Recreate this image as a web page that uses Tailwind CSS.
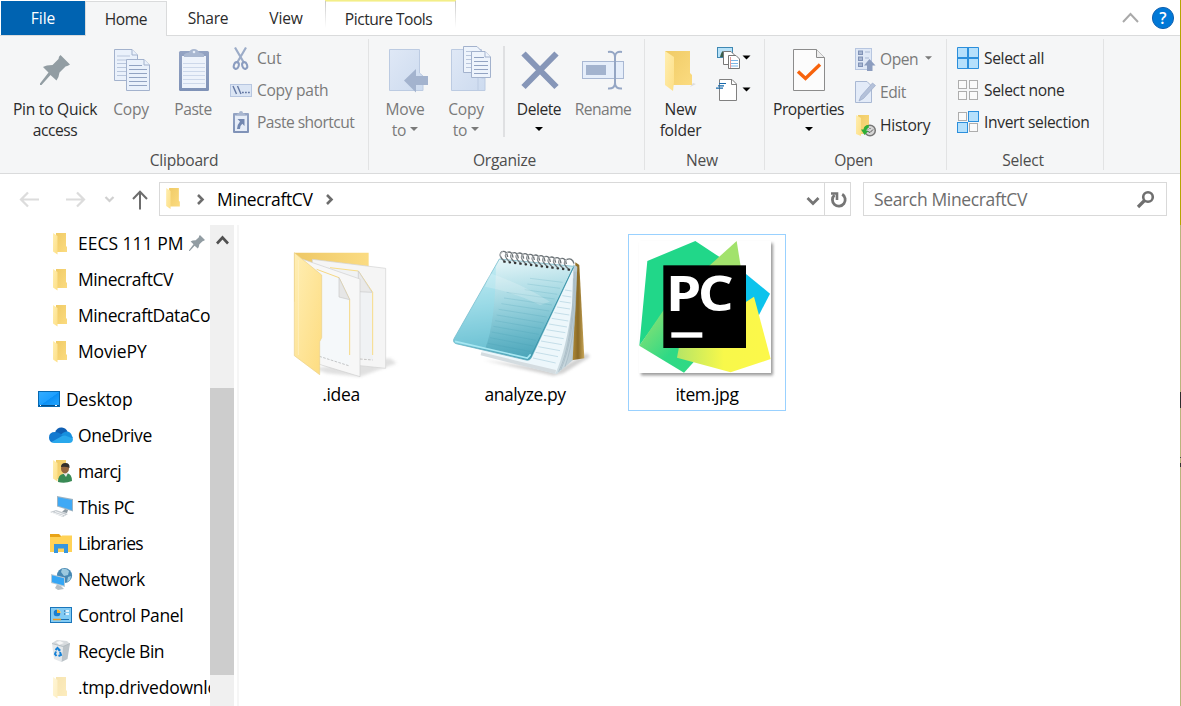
<!DOCTYPE html>
<html lang="en">
<head>
<meta charset="utf-8">
<title>MinecraftCV</title>
<script src="https://cdn.jsdelivr.net/npm/@tailwindcss/browser@4"></script>
</head>
<body class="bg-white">
<svg width="0" height="0" class="absolute">
  <defs>
    <linearGradient id="fold" x1="0" x2="1" y1="0" y2="1"><stop offset="0" stop-color="#f0cb66"/><stop offset="1" stop-color="#fbdb80"/></linearGradient>
    <linearGradient id="flap" x1="0" x2="1" y1="0" y2="1"><stop offset="0" stop-color="#ffeeb0"/><stop offset="1" stop-color="#fddf86"/></linearGradient>
    <linearGradient id="pale" x1="0" x2="1" y1="0" y2="1"><stop offset="0" stop-color="#dfe8f6"/><stop offset="1" stop-color="#cddbef"/></linearGradient>
    <linearGradient id="slate" x1="0" x2="0" y1="0" y2="1"><stop offset="0" stop-color="#93a3c3"/><stop offset="1" stop-color="#7f92b7"/></linearGradient>
    <linearGradient id="screen" x1="0" x2="1" y1="0" y2="1"><stop offset="0" stop-color="#35adff"/><stop offset=".5" stop-color="#1ea0ff"/><stop offset=".52" stop-color="#0c90f5"/><stop offset="1" stop-color="#28a8ff"/></linearGradient>
    <symbol id="sf" viewBox="0 0 14 22"><path d="M3 0H13V13L14 14V19H3Z" fill="url(#fold)"/><path d="M0 0L4.500 3V21.500L0 18.500Z" fill="url(#flap)"/></symbol>
    <symbol id="pin" viewBox="0 0 30 30"><path d="M20.500 0L30 9.500Q28 11 25.500 11.500L19.500 17.500Q19 22 16.500 25.500L10.500 20L1.500 30H0V28.500L8.500 17.500L3 12Q6 10 12.500 10L18.500 4Q18.500 1.500 20.500 0Z" fill="#929da3"/></symbol>
    <symbol id="dd" viewBox="0 0 8 4"><path d="M0 0H8L4 4Z" fill="currentColor"/></symbol>
  </defs>
</svg>
<div class="relative w-[1181px] h-[706px] overflow-hidden bg-white flex flex-col font-['Open_Sans','Noto_Sans',sans-serif] text-[15.6px] text-[#2b2b2b] whitespace-nowrap">

  <!-- Tab strip -->
  <div class="h-9 pl-px flex border-b border-[#dadbdc] shrink-0 relative [&_span]:pt-0.5">
    <div class="mt-px w-[84px] h-[34px] bg-[#0063b1] text-white flex items-center justify-center"><span>File</span></div>
    <div class="mt-px w-[82px] h-[35px] bg-[#f5f6f7] border border-b-0 border-[#dadbdc] flex items-center justify-center -mb-px"><span class="tracking-[-0.4px]">Home</span></div>
    <div class="w-[82px] flex items-center justify-center"><span class="tracking-[-0.3px]">Share</span></div>
    <div class="w-[74px] flex items-center justify-center"><span class="tracking-[-0.2px]">View</span></div>
    <div class="w-[131px] h-7 border-t border-[#f3ee88] bg-linear-to-b from-[#c8c8c8] to-white px-px ml-0.5"><div class="h-full bg-white border-t border-[#f8f5b8] flex items-center justify-center pt-2 pr-1"><span class="tracking-[-0.5px]">Picture Tools</span></div></div>
    <div class="flex-1"></div>
    <svg width="70" height="35" viewBox="1111 0 70 35"><path d="M1123 22L1130.500 14L1138 22" fill="none" stroke="#a9a9a9" stroke-width="2"/><circle cx="1163" cy="18" r="10.600" fill="#0078d7" stroke="#1362b0"/><text x="1163" y="24" text-anchor="middle" font-size="16" font-weight="600" fill="#fff">?</text></svg>
  </div>

  <!-- Ribbon -->
  <div class="h-[138px] pl-px flex bg-[#f5f6f7] border-b border-[#dadbdc] shrink-0 text-[#2b2b2b] tracking-[-0.25px]">
    <!-- Clipboard -->
    <div class="w-[368px] flex flex-col relative">
      <div class="h-[113px] flex pl-[3px]">
        <div class="w-[102px] text-center leading-[21px]">
          <svg class="block" width="102" height="63" viewBox="4 36 102 63"><use href="#pin" x="40" y="55" width="30" height="30"/></svg>
          <div>Pin to Quick</div><div class="tracking-[-0.45px]">access</div>
        </div>
        <div class="w-[50px] text-center leading-[21px] text-[#7a7a7a]">
          <svg class="block" width="50" height="63" viewBox="106 36 50 63"><g fill="#eaf1fb" stroke="#a3b2cd"><path d="M114.500 49.500H132L137.500 55V80.500H114.500Z"/><path d="M132 49.500V55H137.500" /><path d="M117 56h13M117 60h13M117 63.500h9M117 67.500h9M117 71.500h9M117 75.500h9" stroke="#b9c6dc"/><path d="M126.500 59.500H144L149.500 65V90.500H126.500Z"/><path d="M144 59.500V65H149.500"/><path d="M129 65.500h13M129 69.500h18M129 73.500h18M129 77.500h18M129 81.500h18M129 85.500h18" stroke="#92a3c2"/></g></svg>
          Copy
        </div>
        <div class="w-[74px] text-center leading-[21px] text-[#7a7a7a] tracking-[-0.5px]">
          <svg class="block" width="74" height="63" viewBox="156 36 74 63"><rect x="179" y="51" width="30" height="40" rx="1.500" fill="url(#slate)"/><path d="M182 56H206V88H182Z" fill="#eef3fb"/><path d="M183 63.500h22M183 67.500h22M183 71.500h22M183 75.500h22M183 79.500h22M183 83.500h22" stroke="#cdd8ea"/><path d="M184 57V54.500Q185 53 189 52.500Q190 49 194 49Q198 49 199 52.500Q203 53 204 54.500V57Z" fill="#a9b7d0"/><circle cx="194" cy="52" r="1.300" fill="#e6edf8"/></svg>
          Paste
        </div>
        <div class="pt-1.5 text-[#7a7a7a] [&_span]:pt-0.5">
          <div class="h-8 flex items-center"><svg width="27" height="32" viewBox="230 42 27 32"><path d="M235 47.500L243.500 62M246 47.500L237.500 62" stroke="#9cacc8" stroke-width="2.200"/><g fill="none" stroke="#8b9dc0" stroke-width="2"><ellipse cx="236.300" cy="65.500" rx="2.400" ry="3.400" transform="rotate(20 236.300 65.500)"/><ellipse cx="244.700" cy="65.500" rx="2.400" ry="3.400" transform="rotate(-20 244.700 65.500)"/></g></svg><span>Cut</span></div>
          <div class="h-8 flex items-center"><svg width="27" height="32" viewBox="230 74 27 32"><rect x="230.500" y="84.500" width="21" height="12" fill="#dbe5f4" stroke="#b7c6e0"/><path d="M233 86L236.500 94M237.500 86L241 94" stroke="#6478a3" stroke-width="1.400"/><path d="M242 92.500h1.800M245 92.500h1.800M248 92.500h1.800" stroke="#6478a3" stroke-width="1.600"/></svg><span class="tracking-[-0.3px]">Copy path</span></div>
          <div class="h-8 flex items-center"><svg width="27" height="32" viewBox="230 106 27 32"><rect x="233" y="113" width="16" height="20" rx="1" fill="url(#slate)"/><path d="M235 115.500H247V131H235Z" fill="#e6edf8"/><path d="M236 115.500Q237 113 239 113Q239 111 241 111Q243 111 243 113Q245 113 246 115.500Z" fill="#a9b7d0"/><path d="M237.500 119H244.500V126L242.300 123.800Q240 125.500 240 129H237Q237.500 124 240 121.500Z" fill="#7287b0"/></svg><span class="tracking-[-0.53px]">Paste shortcut</span></div>
        </div>
      </div>
      <div class="h-[22px] pt-px pr-0.5 flex items-center justify-center text-[#4d4d4d]">Clipboard</div>
      <div class="absolute right-0 top-[3px] w-px h-[131px] bg-[#e2e3e4]"></div>
    </div>
    <!-- Organize -->
    <div class="w-[276px] flex flex-col relative">
      <div class="h-[113px] flex pl-[5px]">
        <div class="w-[62px] text-center leading-[21px] text-[#7a7a7a]">
          <svg class="block" width="62" height="63" viewBox="374 36 62 63"><path d="M389.500 49.500H419.500V73L423 76V90.500H389.500Z" fill="url(#pale)" stroke="#bccbe2"/><path d="M404 80.500L416 69V76H428V85H416V92.500Z" fill="#a3b3ce"/></svg>
          <div>Move</div><div class="flex items-center justify-center">to<svg class="ml-1 mt-[-3px]" width="8" height="4"><use href="#dd" width="8" height="4"/></svg></div>
        </div>
        <div class="w-[60px] text-center leading-[21px] text-[#7a7a7a]">
          <svg class="block" width="60" height="63" viewBox="436 36 60 63"><path d="M451.500 49.500H481.500V78H485V90.500H451.500Z" fill="url(#pale)" stroke="#bccbe2"/><path d="M478 78V90" stroke="#bccbe2"/><g fill="#eef4fc" stroke="#a3b2cd"><path d="M463.500 46.500H477L482.500 52V72.500H463.500Z"/><path d="M466 51.500h9M466 55.500h9M466 59.500h5M466 63.500h5M466 67.500h5" stroke="#b9c6dc"/><path d="M471.500 51.500H485L490.500 57V77.500H471.500Z"/><path d="M485 51.500V57H490.500"/><path d="M474 57.500h10M474 61.500h14M474 65.500h14M474 69.500h14M474 73.500h14" stroke="#92a3c2"/></g></svg>
          <div>Copy</div><div class="flex items-center justify-center">to<svg class="ml-1 mt-[-3px]" width="8" height="4"><use href="#dd" width="8" height="4"/></svg></div>
        </div>
        <div class="w-0.5 ml-[7px] mr-[3px] mt-2.5 h-[91px] bg-[#dfe0e2]"></div>
        <div class="w-[62px] text-center leading-[21px] tracking-[-0.45px]">
          <svg class="block" width="62" height="63" viewBox="508 36 62 63"><path d="M523.500 53.500L556.500 87M556.500 53.500L523.500 87" stroke="#8696b8" stroke-width="6"/></svg>
          <div>Delete</div><svg class="mx-auto mt-[7px] text-black" width="8" height="4"><use href="#dd" width="8" height="4"/></svg>
        </div>
        <div class="w-[66px] text-center leading-[21px] text-[#7a7a7a] tracking-[-0.55px]">
          <svg class="block" width="66" height="63" viewBox="570 36 66 63"><rect x="582.500" y="61.500" width="41" height="17" fill="#e6eefa" stroke="#a9b8d3"/><rect x="586" y="65" width="20" height="10" fill="#a3b3ce"/><path d="M608 52Q615 51 615 57V83Q615 89 608 88.500M622 52Q615 51 615 57M615 83Q615 89 622 88.500" fill="none" stroke="#95a6c4" stroke-width="2"/></svg>
          Rename
        </div>
      </div>
      <div class="h-[22px] pt-px pr-[5px] flex items-center justify-center text-[#4d4d4d]">Organize</div>
      <div class="absolute right-0 top-[3px] w-px h-[131px] bg-[#e2e3e4]"></div>
    </div>
    <!-- New -->
    <div class="w-[120px] flex flex-col relative">
      <div class="h-[113px] flex pl-2">
        <div class="w-[55px] text-center leading-[21px]">
          <svg class="block" width="55" height="63" viewBox="653 36 55 63"><path d="M690 87l6-3-3-1z" fill="#ddd"/><path d="M665 51H690V73L692 75V85H672Z" fill="url(#fold)"/><path d="M665 51L674 57V82L673 91L665 85Z" fill="url(#flap)"/></svg>
          <div>New</div><div>folder</div>
        </div>
        <svg width="48" height="72" viewBox="708 36 48 72"><rect x="717.500" y="47.500" width="15" height="10" fill="#b8e2f8" stroke="#3f88b3"/><path d="M720 57Q722 49 724 52Q726 54 726 57Z" fill="#39604d"/><g fill="#fff" stroke="#777"><path d="M723.500 51.500H731L734.500 55V64.500H723.500Z"/><path d="M728.500 55.500H736L739.500 59V68.500H728.500Z"/></g><path d="M730 60.500h8M730 63.500h8M730 66h8" stroke="#7ab6e6"/><path d="M730.500 57v11" stroke="#e59a9a"/><path d="M742.500 55.500h8l-4 4z" fill="#000"/><path d="M719.500 79.500H732L736.500 84V100.500H719.500Z" fill="#fff" stroke="#808080"/><path d="M731.500 79.500V84.500H736.500" fill="none" stroke="#808080"/><path d="M719 83.500h7M718 85.800h6M716 88.200h7" stroke="#1568ab" stroke-width="1.200"/><path d="M742.500 87.500h8l-4 4z" fill="#000"/></svg>
      </div>
      <div class="h-[22px] pt-px pr-1.5 flex items-center justify-center text-[#4d4d4d]">New</div>
      <div class="absolute right-0 top-[3px] w-px h-[131px] bg-[#e2e3e4]"></div>
    </div>
    <!-- Open -->
    <div class="w-[182px] flex flex-col relative">
      <div class="h-[113px] flex pl-[5px]">
        <div class="w-[77px] text-center leading-[21px] tracking-[-0.45px]">
          <svg class="block" width="77" height="63" viewBox="770 36 77 63"><path d="M793.500 49.500H816.500L824.500 57.500V90.500H793.500Z" fill="#fcfcfc" stroke="#8c8c8c"/><path d="M816.500 49.500V57.500H824.500" fill="#eee" stroke="#8c8c8c"/><path d="M798 71.500L805.500 78.500L820 64.500" fill="none" stroke="#f7630c" stroke-width="3.400"/></svg>
          <div>Properties</div><svg class="mx-auto mt-[7px] text-black" width="8" height="4"><use href="#dd" width="8" height="4"/></svg>
        </div>
        <div class="pl-1.5 pt-[7px] [&_span]:pt-px">
          <div class="h-[33px] flex items-center text-[#7a7a7a]"><svg width="27" height="33" viewBox="853 43 27 33"><rect x="855.500" y="48.500" width="16" height="21" fill="#dfe8f6" stroke="#b7c6e0"/><g fill="#a7b6d1" stroke="#8092b6"><rect x="858.500" y="51" width="4" height="3.500"/><rect x="858.500" y="57" width="4" height="3.500"/><rect x="858.500" y="63" width="4" height="3.500"/></g><path d="M865 52h5M865 58h4" stroke="#a9b8d3"/><path d="M869.500 59L875.500 65.500H872.500V71H867V65.500H864Z" fill="#8c9dbf"/></svg><span class="tracking-[-0.5px]">Open</span><svg class="ml-[7px] mt-[-3px]" width="7" height="4"><use href="#dd" width="7" height="4"/></svg></div>
          <div class="h-[33px] flex items-center text-[#7a7a7a]"><svg width="27" height="33" viewBox="853 76 27 33"><path d="M855.500 81.500H867L871.500 86V102.500H855.500Z" fill="#e3ebf8" stroke="#a9b8d3"/><path d="M859 101L861 96L872.500 83L875.500 85.500L863.500 98.500Z" fill="#b4c1d9" stroke="#9babca" stroke-width=".7"/></svg><span class="tracking-[-0.45px]">Edit</span></div>
          <div class="h-[33px] flex items-center"><svg width="27" height="33" viewBox="853 109 27 33"><path d="M858 115H869V134H858Z" fill="url(#fold)"/><path d="M856 115L861 118V136L856 134Z" fill="url(#flap)"/><circle cx="870" cy="130.500" r="5.300" fill="#d6d6d6" stroke="#777" stroke-width="1.500"/><path d="M867 131l3 1.500 3-3M870 128v1M867 128.500l1 1" stroke="#555" fill="none"/><path d="M868.500 125Q864 125 863.500 129.500H861L864.500 135L868.500 131H866.500Q866.500 128 869 127.500Z" fill="#2fae38"/></svg><span>History</span></div>
        </div>
      </div>
      <div class="h-[22px] pt-px pr-[5px] flex items-center justify-center text-[#4d4d4d] tracking-[-0.4px]">Open</div>
      <div class="absolute right-0 top-[3px] w-px h-[131px] bg-[#e2e3e4]"></div>
    </div>
    <!-- Select -->
    <div class="w-[157px] flex flex-col relative">
      <div class="h-[113px] pl-2 pt-1.5 tracking-[-0.36px] [&_span]:pt-0.5">
        <div class="h-8 flex items-center"><svg width="29" height="32" viewBox="955 42 29 32"><path d="M957.500 47.500H978.500V68.500H957.500Z" fill="#b5e0fc" stroke="#2b8fdc"/><path d="M968 47V69M957 58H979" stroke="#2b8fdc" stroke-width="2"/></svg><span>Select all</span></div>
        <div class="h-8 flex items-center"><svg width="29" height="32" viewBox="955 74 29 32"><g fill="#fafafa" stroke="#adadad"><rect x="958.500" y="80.500" width="8" height="8"/><rect x="969.500" y="80.500" width="8" height="8"/><rect x="958.500" y="91.500" width="8" height="8"/><rect x="969.500" y="91.500" width="8" height="8"/></g></svg><span>Select none</span></div>
        <div class="h-8 flex items-center"><svg width="29" height="32" viewBox="955 106 29 32"><g fill="#fafafa" stroke="#adadad"><rect x="958.500" y="112.500" width="8" height="8"/><rect x="969.500" y="123.500" width="8" height="8"/></g><g fill="#b5e0fc" stroke="#2b8fdc"><rect x="968.500" y="111.500" width="10" height="10"/><rect x="957.500" y="122.500" width="10" height="10"/></g></svg><span>Invert selection</span></div>
      </div>
      <div class="h-[22px] pt-px pr-[5px] flex items-center justify-center text-[#4d4d4d]">Select</div>
      <div class="absolute right-0 top-[3px] w-px h-[131px] bg-[#e2e3e4]"></div>
    </div>
  </div>

  <!-- Address row -->
  <div class="h-[51px] flex pt-2 shrink-0 text-[17.5px] text-black tracking-[-0.36px]">
    <svg width="159" height="34" viewBox="0 182 159 34" fill="none"><g stroke="#dcdcdc" stroke-width="2.200"><path d="M39 199.500H21M28 192.500L21 199.500L28 206.500M66 199.500H84M77 192.500L84 199.500L77 206.500"/><path d="M105.500 197L109.500 201L113.500 197" stroke="#d0d0d0"/></g><path d="M140 209.500V192M133 199L140 191.700L147 199" stroke="#6d6d6d" stroke-width="2"/></svg>
    <div class="w-[692px] h-[34px] border border-[#d9d9d9] flex items-center">
      <svg width="57" height="32" viewBox="160 183 57 32"><use href="#sf" x="166" y="188" width="14" height="21.500"/><path d="M198 195L202.500 199.500L198 204" fill="none" stroke="#6d6d6d" stroke-width="2.600"/></svg>
      <span>MinecraftCV</span>
      <svg width="30" height="32" viewBox="313 183 30 32"><path d="M327 195L331.500 199.500L327 204" fill="none" stroke="#6d6d6d" stroke-width="2.600"/></svg>
      <div class="flex-1"></div>
      <svg width="50" height="32" viewBox="800 183 50 32" fill="none"><path d="M807.500 198L813 203.500L818.500 198" stroke="#757575" stroke-width="2.800"/><path d="M824.500 182V216" stroke="#d9d9d9"/><path d="M842.200 194.300A6.400 6.400 0 1 1 834.500 195" stroke="#757575" stroke-width="2.800"/><path d="M831 193.500H837V200" stroke="#757575" stroke-width="2.600"/></svg>
    </div>
    <div class="ml-3 w-[304px] h-[34px] border border-[#d9d9d9] flex items-center justify-between pl-2.5 text-[#6d6d6d]">
      <span>Search MinecraftCV</span>
      <svg width="34" height="32" viewBox="1132 183 34 32" fill="none" stroke="#6f6f6f"><circle cx="1148" cy="197" r="4.800" stroke-width="2.600"/><path d="M1144.500 200.500L1138 207" stroke-width="3.200"/></svg>
    </div>
  </div>

  <!-- Body -->
  <div class="flex-1 flex min-h-0 text-[17.5px] text-black">
    <div class="w-[210px] overflow-hidden shrink-0 tracking-[-0.4px]">
      <div class="h-9 flex items-center pl-[53px]"><svg class="mt-0.5" width="25" height="22"><use href="#sf" width="14" height="22"/></svg><span class="tracking-[0px]">EECS 111 PM</span><svg class="ml-1.5" width="16" height="16"><use href="#pin" width="16" height="16"/></svg></div>
      <div class="h-9 flex items-center pl-[53px]"><svg class="mt-0.5" width="25" height="22"><use href="#sf" width="14" height="22"/></svg><span>MinecraftCV</span></div>
      <div class="h-9 flex items-center pl-[53px]"><svg class="mt-0.5 shrink-0" width="25" height="22"><use href="#sf" width="14" height="22"/></svg><span>MinecraftDataCo</span></div>
      <div class="h-9 flex items-center pl-[53px]"><svg class="mt-0.5" width="25" height="22"><use href="#sf" width="14" height="22"/></svg><span class="tracking-[-0.15px]">MoviePY</span></div>
      <div class="mt-3 h-9 flex items-center pl-[38px]"><svg width="28" height="16"><rect x=".5" y=".5" width="21" height="15" fill="url(#screen)" stroke="#0868b0"/><path d="M1 14.500H21" stroke="#064f8a"/><path d="M2 14.500h1M17 14.500h2" stroke="#fff"/></svg><span class="tracking-[-0.15px]">Desktop</span></div>
      <div class="h-9 flex items-center pl-[49px]"><svg width="29" height="16" viewBox="0 0 29 16"><path d="M6 5.500Q8 0 13 .5Q17 1 18.500 4.500L15 9L6 6Z" fill="#0f5fb3"/><path d="M0 10.500Q0 5 6 5Q9 5 12 7L16 9L3 15.500Q0 14 0 10.500Z" fill="#1279d0"/><path d="M12 8Q14 4.500 18.500 4.500Q22 5 23 9L24 11Q22 13 16 10Z" fill="#1790df"/><path d="M2.500 15L13 9L16 8.500L24 11.500Q24 16 20 16H5Q3.500 16 2.500 15Z" fill="#29a8ec"/></svg><span>OneDrive</span></div>
      <div class="h-9 flex items-center pl-[49px]"><svg width="29" height="24" viewBox="0 0 29 24"><use href="#sf" x="4" y="1" width="14" height="22"/><path d="M9 23Q9 15.500 14 15L18 14Q23 15 23 22Q16 25 9 23Z" fill="#398a55"/><path d="M14 14L17 18L19 14Z" fill="#e8e8e8"/><ellipse cx="16" cy="9.500" rx="4" ry="5" fill="#94663f"/><path d="M12 8Q12 4 16.500 4Q21 4 20.500 9L18 8Q15 7.500 12 8Z" fill="#33302d"/></svg><span class="tracking-[-0.55px]">marcj</span></div>
      <div class="h-9 flex items-center pl-[49px]"><svg width="29" height="24" viewBox="0 0 29 24"><path d="M8 1L24 4V16.500L8 11.500Z" fill="#9db4c4"/><path d="M9 2.300L23 5V15.200L9 10.800Z" fill="#3fa9f5"/><path d="M16 14L19 15L18 18L13 17Z" fill="#8f9ba3"/><path d="M1 17L7 15L19 19L14 22Z" fill="#c5cbd0"/><path d="M3 17.500L14 21M6 16.500L16 20" stroke="#fff" stroke-width=".8"/></svg><span>This PC</span></div>
      <div class="h-9 flex items-center pl-[49px]"><svg width="29" height="22" viewBox="0 0 29 22"><path d="M1 2H10L12 4V8H1Z" fill="#e8a317"/><path d="M1 5H11L13 3.500H23V20H1Z" fill="#ffd257"/><path d="M5 12H19V21H15V16.500H9V21H5Z" fill="#3596de"/></svg><span class="tracking-[-0.65px]">Libraries</span></div>
      <div class="h-9 flex items-center pl-[49px]"><svg width="29" height="24" viewBox="0 0 29 24"><circle cx="15.500" cy="8.500" r="7.600" fill="#4788b3"/><path d="M13 2Q17 1 20 4L19 8L15 9L12 5ZM19 10l3-1-1 4-3 2z" fill="#9dcadf"/><path d="M2 7L16 10.500V20L2 16Z" fill="#b9cbd6"/><path d="M3 8.300L15 11.300V18.500L3 15.200Z" fill="#35a6f5"/><path d="M8 17.500L12 19L15 22L9 23L6 21Z" fill="#b7c0c6"/></svg><span>Network</span></div>
      <div class="h-9 flex items-center pl-[49px]"><svg width="29" height="16" viewBox="0 0 29 16"><rect x="1.500" y=".5" width="21" height="15" fill="#82cbf4" stroke="#1a76bb"/><circle cx="8" cy="6" r="3.500" fill="#fff"/><path d="M8 6V2.500A3.500 3.500 0 1 0 11.500 6Z" fill="#1b7fd0"/><path d="M8 6V2.500A3.500 3.500 0 0 1 11.500 6Z" fill="#f7b22f"/><path d="M15 4h5M15 7h5" stroke="#fff" stroke-width="1.700"/><path d="M15 4h1.500M15 7h1.500" stroke="#1a6cab" stroke-width="1.700"/><path d="M4 12.500h8" stroke="#f29a1f" stroke-width="1.500"/><path d="M12 12.500h8" stroke="#1b6fb0"/></svg><span>Control Panel</span></div>
      <div class="h-9 flex items-center pl-[49px]"><svg width="29" height="24" viewBox="0 0 29 24"><path d="M3 4L8 1L18 2L21 5L12 8Z" fill="#d7dbde"/><path d="M7 3l4-1 4 2-5 2z" fill="#f7f7f7"/><path d="M3 4.500L14 7.500L12.500 23L5 20Z" fill="#e4e8eb"/><path d="M14 7.500L21 4.500L18.500 20L12.500 23Z" fill="#bcc3c8"/><path d="M3 4.500L14 7.500L21 4.500" fill="none" stroke="#aab2b8" stroke-width=".8"/><path d="M6.500 11l2-2 2 2-1 1M11 13l1 3-2.500 1M7.500 17l-1.500-2 1-2.500" fill="none" stroke="#1681d6" stroke-width="2"/></svg><span class="tracking-[-0.48px]">Recycle Bin</span></div>
      <div class="h-9 flex items-center pl-[53px]"><svg class="mt-0.5 opacity-50 shrink-0" width="25" height="22"><use href="#sf" width="14" height="22"/></svg><span class="tracking-[-0.25px]">.tmp.drivedownlo</span></div>
    </div>
    <div class="w-6 bg-[#f0f0f0] shrink-0">
      <svg class="block" width="24" height="163" viewBox="210 225 24 163"><path d="M217 243.500L222.500 237.500L228 243.500" fill="none" stroke="#505050" stroke-width="2.600"/></svg>
      <div class="h-[287px] bg-[#cdcdcd]"></div>
    </div>
    <div class="w-0.5 ml-[3px] bg-[#f6f6f6]"></div>
    <div class="flex gap-[25px] pl-[23px] pt-[9px] tracking-[-0.35px]">
      <div class="w-[158px] h-[177px] border border-transparent text-center">
        <svg class="block" width="156" height="147" viewBox="-51 0 468 441">
          <defs>
            <linearGradient id="g1" x1="0" x2="1" y1="0" y2="1"><stop offset="0" stop-color="#ffeeb3"/><stop offset="1" stop-color="#fddc80"/></linearGradient>
            <linearGradient id="g0" x1="0" x2="1"><stop offset="0" stop-color="#eec866"/><stop offset="1" stop-color="#fbdc83"/></linearGradient>
            <filter id="sh"><feGaussianBlur stdDeviation="5"/></filter>
          </defs>
          <path d="M100 400L330 370L350 385L240 425L140 415Z" fill="#ccc" opacity=".6" filter="url(#sh)"/>
          <path d="M43 53H266V200H43Z" fill="url(#g0)"/>
          <path d="M97 73L317 100V400L240 392L97 360Z" fill="#f5f5f5" stroke="#d2d2d2" stroke-width="2"/>
          <path d="M140 97L235 108L278 172V375L140 350Z" fill="#f0f2f4"/>
          <path d="M150 98L235 108L278 172V360" fill="none" stroke="#f8dc86" stroke-width="3"/>
          <path d="M235 108V170L276 172Z" fill="#e9e9e9" stroke="#c9c9c9" stroke-width="2"/>
          <path d="M60 70L240 132V425L118 388Z" fill="#f7f7f7" stroke="#cfcfcf" stroke-width="2"/>
          <path d="M110 103L177 128L209 194V394L110 365Z" fill="#f5f8fa"/>
          <path d="M110 103L177 128L209 194V360" fill="none" stroke="#f5d884" stroke-width="3"/>
          <path d="M118 364L209 393" stroke="#aaa" stroke-width="2" stroke-dasharray="8 4"/>
          <path d="M240 372L278 375" stroke="#aaa" stroke-width="2" stroke-dasharray="8 4"/>
          <path d="M177 128V186L209 194Z" fill="#e6e6e6" stroke="#c9c9c9" stroke-width="2"/>
          <path d="M43 53L125 120V308L119 320V419L43 362Z" fill="url(#g1)" stroke="#ecd08a" stroke-width="2"/>
          <path d="M55 75V360" stroke="#fff3c8" stroke-width="2"/>
        </svg>
        <div class="leading-6">.idea</div>
      </div>
      <div class="w-[158px] h-[177px] border border-transparent text-center">
        <svg class="block" width="156" height="147" viewBox="18 0 468 441">
          <defs>
            <linearGradient id="n1" x1=".45" x2=".6" y1="0" y2="1"><stop offset="0" stop-color="#e4f5f8"/><stop offset=".4" stop-color="#a4d8e2"/><stop offset=".75" stop-color="#69b8c9"/><stop offset="1" stop-color="#48a3b8"/></linearGradient>
            <linearGradient id="n2" x1="0" x2="1" y1="0" y2=".2"><stop offset="0" stop-color="#e0edf2"/><stop offset="1" stop-color="#b7c9d1"/></linearGradient>
            <linearGradient id="n3" x1="0" x2="1"><stop offset="0" stop-color="#b48f3c"/><stop offset=".5" stop-color="#8a6a25"/><stop offset="1" stop-color="#c9a75a"/></linearGradient>
          </defs>
          <path d="M130 375L350 405L440 355L450 365L370 415L340 422Z" fill="#999" opacity=".45" filter="url(#sh)"/>
          <path d="M406 82L418 90L433 370L395 376Z" fill="url(#n3)"/>
          <path d="M400 88L412 95L398 376L350 418L335 410Z" fill="url(#n2)"/>
          <path d="M404 110Q405 310 362 405M408 110Q410 300 375 395M400 130Q400 320 356 410" fill="none" stroke="#a0b4be" stroke-width="2"/>
          <path d="M400 92L396 210Q380 340 346 416L122 360L126 346L270 375Z" fill="#edf7fb"/>
          <path d="M124 352L348 405L346 417L122 361Z" fill="#d4dce0"/>
          <path d="M375 165l20 3M367 182l27 4M359 199l33 5M351 216l39 6M343 233l45 7M335 250l50 8M327 267l54 9M319 284l57 9M311 301l60 10M303 318l63 11M295 335l65 12M287 352l67 13M279 369l68 15" stroke="#bcd9e5" stroke-width="2.500"/>
          <path d="M178 72L402 94L275 366Q270 378 258 375L48 326Q37 322 42 311Z" fill="url(#n1)" stroke="#65aebf" stroke-width="2"/>
          <path d="M270 130l98 12M262 147l98 13M254 164l98 14M200 172l144 20M192 189l144 21M184 206l144 22M176 223l144 23M170 240l142 24M165 257l139 24M160 274l136 24M155 291l133 25M150 308l130 25M144 325l128 25" stroke="#3f95aa" stroke-opacity=".22" stroke-width="2.500"/>
          <path d="M178 72L168 94Q165 270 135 342L48 326Q37 322 42 311Z" fill="#8de0f0" opacity=".38"/>
          <path d="M150 115Q240 145 330 200L300 210Q220 170 135 155Z" fill="#fff" opacity=".2"/>
          <path d="M45 319L262 369L272 358" fill="none" stroke="#a7e7f2" stroke-width="5"/>
          <path d="M400 97L272 366" stroke="#3c95aa" stroke-width="3"/>
          <g fill="none" stroke="#6d7478" stroke-width="4"><path d="M193 79Q172 60 186 50Q200 45 203 66M209 81Q188 62 202 52Q216 47 219 68M225 83Q204 64 218 54Q232 49 235 70M241 84Q220 65 234 55Q248 50 251 71M257 86Q236 67 250 57Q264 52 267 73M273 88Q252 69 266 59Q280 54 283 75M289 90Q268 71 282 61Q296 56 299 77M305 92Q284 73 298 63Q312 58 315 79M321 94Q300 75 314 65Q328 60 331 81M337 96Q316 77 330 67Q344 62 347 83M353 98Q332 79 346 69Q360 64 363 85M369 100Q348 81 362 71Q376 66 379 87M386 103Q365 84 379 74Q397 66 402 86"/></g>
          <g fill="none" stroke="#e4e6e7" stroke-width="2"><path d="M184 66Q178 54 188 49M200 68Q194 56 204 51M216 70Q210 58 220 53M232 71Q226 59 236 54M248 73Q242 61 252 56M264 75Q258 63 268 58M280 77Q274 65 284 60M296 79Q290 67 300 62M312 81Q306 69 316 64M328 83Q322 71 332 66M344 85Q338 73 348 68M360 87Q354 75 364 70M377 90Q371 78 381 73"/></g>
          <path d="M193 80h1M209 82h1M225 84h1M241 86h1M257 88h1M273 90h1M289 92h1M305 94h1M321 96h1M337 98h1M353 100h1M369 102h1M386 104h1" stroke="#333" stroke-width="7" stroke-linecap="round"/>
        </svg>
        <div class="leading-6 pl-0.5 tracking-[-0.45px]">analyze.py</div>
      </div>
      <div class="w-[158px] h-[177px] border border-[#99d1ff] text-center">
        <svg class="block" width="156" height="147" viewBox="27 30 468 441">
          <defs>
            <linearGradient id="p2" x1="0" x2="1"><stop offset="0" stop-color="#b5e566"/><stop offset=".5" stop-color="#f8f84a"/><stop offset="1" stop-color="#fcf84a"/></linearGradient>
            <linearGradient id="p3" x1="0" x2="1" y1="0" y2="1"><stop offset="0" stop-color="#9be36f"/><stop offset=".6" stop-color="#2fd985"/><stop offset="1" stop-color="#30d984"/></linearGradient>
          </defs>
          <rect x="63" y="55" width="396" height="396" fill="#777" opacity=".75" filter="url(#sh)"/>
          <rect x="57" y="48" width="396" height="396" fill="#fff"/>
          <path d="M378 147L450 206L417 270L378 250Z" fill="#0cc3ec"/>
          <path d="M82 108L226 48L300 97L270 200L131 260L58 362Z" fill="#21d789"/>
          <path d="M131 255L58 362L192 443L240 390Z" fill="url(#p3)"/>
          <path d="M266 124L350 48L362 124Z" fill="#a2e26c"/>
          <path d="M402 215L452 402L332 442L171 398L178 360Z" fill="url(#p2)"/>
          <rect x="130" y="121" width="248" height="248" fill="#000"/>
          <g font-family="Open Sans" font-weight="700" font-size="145" fill="#fff" letter-spacing="0"><text x="137" y="257" textLength="107" lengthAdjust="spacingAndGlyphs">P</text><text x="233" y="257" textLength="108" lengthAdjust="spacingAndGlyphs">C</text></g>
          <rect x="154" y="322" width="93" height="16" fill="#fff"/>
        </svg>
        <div class="leading-6">item.jpg</div>
      </div>
    </div>
  </div>

  <!-- Right window edge -->
  <div class="absolute right-0 top-0 w-px h-full flex flex-col bg-[#b9b47c]"><div class="h-[225px] bg-[#b5a500]"></div><div class="mt-[167px] h-4 bg-[#2d2d2d]"></div><div class="mt-[49px] h-px bg-[#444]"></div><div class="mt-[5px] h-1 bg-[#333]"></div></div>
</div>
</body>
</html>
